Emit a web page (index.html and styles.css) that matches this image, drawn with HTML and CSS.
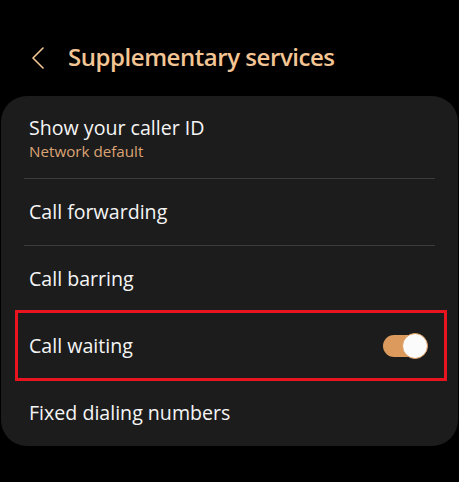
FILE: index.html
```html
<!DOCTYPE html>
<html lang="en">
<head>
  <meta charset="UTF-8">
  <meta name="viewport" content="width=device-width, initial-scale=1.0">
  <title>Supplementary services</title>
  <link rel="stylesheet" href="styles.css">
</head>
<body>
  <div class="screen">
    <header class="top-bar">
      <button class="back" aria-label="Back">
        <svg width="14" height="22" viewBox="0 0 14 22">
          <polyline points="12,1 2,11 12,21" fill="none" stroke="#f4c594" stroke-width="1.6" stroke-linecap="round" stroke-linejoin="round"/>
        </svg>
      </button>
      <h1>Supplementary services</h1>
    </header>

    <div class="card">
      <div class="item first">
        <div class="label">
          <span class="title">Show your caller ID</span>
          <span class="sub">Network default</span>
        </div>
      </div>
      <div class="item">
        <span class="title">Call forwarding</span>
      </div>
      <div class="item">
        <span class="title">Call barring</span>
      </div>
      <div class="item highlight">
        <span class="title">Call waiting</span>
        <div class="switch on"><div class="knob"></div></div>
      </div>
      <div class="item">
        <span class="title">Fixed dialing numbers</span>
      </div>
    </div>
  </div>
</body>
</html>
```

FILE: styles.css
```css
/* General Styles */
body {
  margin: 0;
  padding: 0;
  background: #000;
  font-family: 'Open Sans', 'Noto Sans', sans-serif;
  color: #f5f5f5;
}

.screen {
  width: 459px;
  height: 482px;
  overflow: hidden;
}

/* Header */
.top-bar {
  display: flex;
  align-items: center;
  height: 77px;
  padding: 19px 0 0 31px;
}

.back {
  background: none;
  border: none;
  padding: 0;
  margin: 0 23px 0 0;
  display: flex;
  cursor: pointer;
}

h1 {
  margin: 0 0 2px;
  font-size: 24px;
  font-weight: 600;
  color: #f4c594;
  letter-spacing: -0.45px;
}

/* Card */
.card {
  margin: 0 1px;
  background: #1c1c1c;
  border-radius: 26px;
}

.item {
  position: relative;
  display: flex;
  align-items: center;
  justify-content: space-between;
  height: 66px;
  margin: 0 23px;
  padding: 0 5px;
  border-top: 1px solid #3b3b3b;
}

.item.first {
  height: 82px;
  border-top: none;
}

.item.highlight,
.item.highlight + .item {
  border-top-color: transparent;
}

.label {
  display: flex;
  flex-direction: column;
  padding-top: 2px;
}

.title {
  font-size: 19.6px;
  line-height: 26px;
}

.sub {
  font-size: 15.2px;
  line-height: 20px;
  color: #dba374;
}

/* Red annotation box */
.item.highlight:after {
  content: '';
  position: absolute;
  left: -9px;
  right: -12px;
  top: -3px;
  bottom: -2px;
  border: 3px solid #e8141f;
}

/* Switch */
.switch {
  position: relative;
  width: 44px;
  height: 22px;
  margin-right: 3px;
  border-radius: 11px;
  background: #dc9a5c;
}

.switch .knob {
  position: absolute;
  right: 0;
  top: -2px;
  width: 24px;
  height: 24px;
  border-radius: 50%;
  background: #fbfbfb;
  border: 1px solid #dc9a5c;
  box-sizing: content-box;
  margin-right: -1px;
}
```
